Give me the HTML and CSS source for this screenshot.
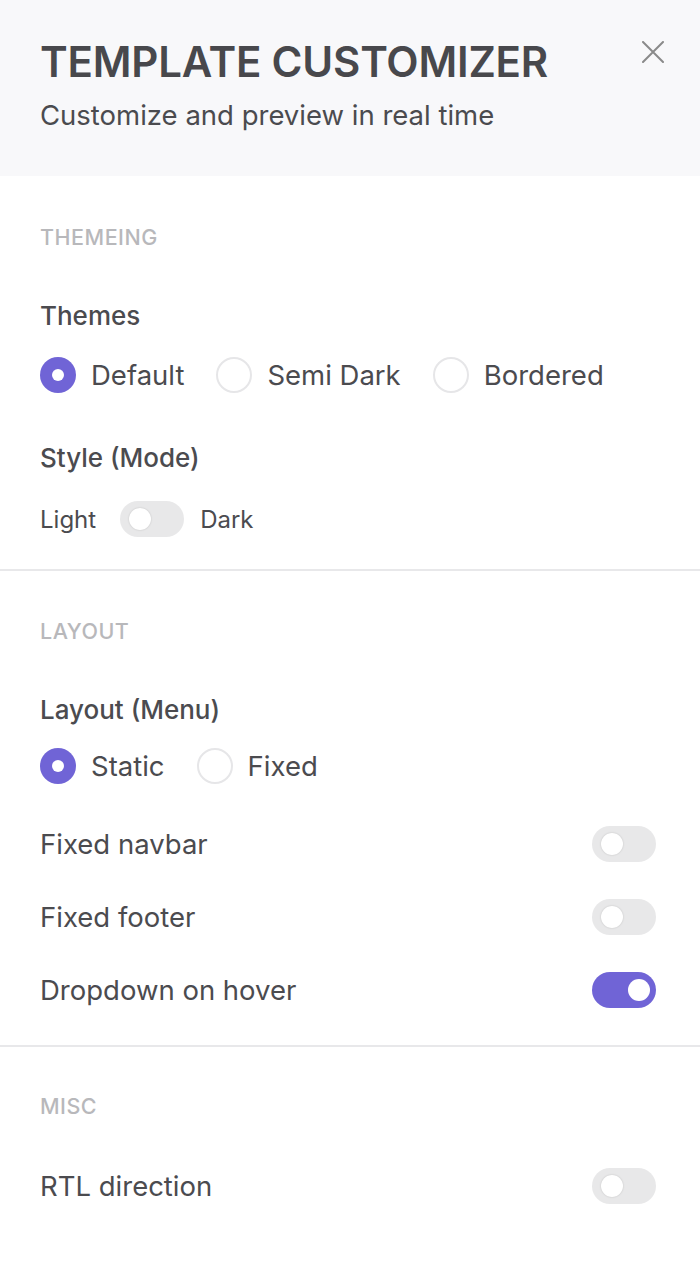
FILE: index.html
```html
<!DOCTYPE html>
<html lang="en">
<head>
<meta charset="utf-8">
<title>Template Customizer</title>
<link rel="stylesheet" href="styles.css">
</head>
<body>
<aside class="customizer">
  <header class="head">
    <div class="head-text">
      <h1 class="title">TEMPLATE CUSTOMIZER</h1>
      <p class="subtitle">Customize and preview in real time</p>
    </div>
    <button class="close" aria-label="Close">
      <svg width="22" height="22" viewBox="0 0 22 22"><path d="M1 1 L21 21 M21 1 L1 21" stroke="#8a8a8a" stroke-width="2" stroke-linecap="round"/></svg>
    </button>
  </header>

  <section class="section theming">
    <h2 class="section-title">THEMEING</h2>
    <div class="group">
      <h3 class="group-title">Themes</h3>
      <div class="radios">
        <label class="radio"><span class="dot checked"></span>Default</label>
        <label class="radio"><span class="dot"></span>Semi Dark</label>
        <label class="radio"><span class="dot"></span>Bordered</label>
      </div>
    </div>
    <div class="group">
      <h3 class="group-title">Style (Mode)</h3>
      <div class="mode">
        <span>Light</span>
        <span class="switch"></span>
        <span>Dark</span>
      </div>
    </div>
  </section>

  <section class="section layout">
    <h2 class="section-title">LAYOUT</h2>
    <div class="group">
      <h3 class="group-title">Layout (Menu)</h3>
      <div class="radios">
        <label class="radio"><span class="dot checked"></span>Static</label>
        <label class="radio"><span class="dot"></span>Fixed</label>
      </div>
    </div>
    <div class="rows">
      <div class="row"><span>Fixed navbar</span><span class="switch"></span></div>
      <div class="row"><span>Fixed footer</span><span class="switch"></span></div>
      <div class="row"><span>Dropdown on hover</span><span class="switch on"></span></div>
    </div>
  </section>

  <section class="section misc">
    <h2 class="section-title">MISC</h2>
    <div class="rows">
      <div class="row"><span>RTL direction</span><span class="switch"></span></div>
    </div>
  </section>
</aside>
</body>
</html>
```

FILE: styles.css
```css
* { box-sizing: border-box; }
html, body { margin: 0; padding: 0; background: #fff; }
body {
  font-family: Inter, "Noto Sans", "Liberation Sans", sans-serif;
  color: #4b4b4f;
}
.customizer { width: 700px; }
.head {
  background: #f8f8fa;
  height: 176px;
  padding: 38px 36px 0 40px;
  display: flex;
  justify-content: space-between;
  align-items: flex-start;
}
.title {
  margin: 0;
  font-size: 42px;
  font-weight: 600;
  line-height: 48px;
  letter-spacing: -0.2px;
  color: #48484c;
}
.subtitle {
  margin: 13px 0 0;
  font-size: 27.5px;
  line-height: 32px;
  font-weight: 400;
  color: #4b4b4f;
}
.close {
  border: 0;
  background: none;
  padding: 0;
  margin-top: 3px;
  width: 22px;
  height: 22px;
  cursor: pointer;
}
.section {
  padding: 49px 44px 32px 40px;
  border-bottom: 2px solid #e8e8ea;
}
.section.layout { padding-top: 48px; padding-bottom: 37px; }
.section.misc { padding-top: 47px; border-bottom: 0; }
.section-title {
  margin: 0;
  font-size: 21.5px;
  font-weight: 500;
  color: #b8b8bb;
  line-height: 24px;
  letter-spacing: 0.5px;
}
.group { margin-top: 51px; }
.group + .group { margin-top: 49px; }
.group-title {
  margin: 0;
  font-size: 26px;
  font-weight: 500;
  line-height: 32px;
  color: #4b4b4f;
}
.radios {
  display: flex;
  gap: 32px;
  margin-top: 25px;
}
.layout .radios { margin-top: 22px; }
.radio {
  display: flex;
  align-items: center;
  gap: 15px;
  font-size: 27.5px;
  line-height: 36px;
  color: #4b4b4f;
}
.dot {
  width: 36px;
  height: 36px;
  border-radius: 50%;
  border: 2px solid #e6e6e8;
  background: #fff;
  display: inline-block;
  position: relative;
  flex: none;
}
.dot.checked {
  border: 0;
  background: #7064d6;
}
.dot.checked::after {
  content: "";
  position: absolute;
  left: 12px;
  top: 12px;
  width: 12px;
  height: 12px;
  border-radius: 50%;
  background: #fff;
}
.mode {
  display: flex;
  align-items: center;
  gap: 16px;
  margin-top: 27px;
  font-size: 24px;
  color: #4b4b4f;
}
.mode .switch { margin-left: 8px; }
.switch {
  width: 64px;
  height: 36px;
  border-radius: 18px;
  background: #e8e8e9;
  position: relative;
  display: inline-block;
  flex: none;
}
.switch::after {
  content: "";
  position: absolute;
  top: 7px;
  left: 9px;
  width: 22px;
  height: 22px;
  border-radius: 50%;
  background: #fff;
  box-shadow: 0 0 2px rgba(0,0,0,0.18);
}
.switch.on { background: #7064d6; }
.switch.on::after { left: 36px; box-shadow: none; }
.rows { margin-top: 42px; display: flex; flex-direction: column; gap: 37px; }
.misc .rows { margin-top: 50px; }
.row {
  display: flex;
  justify-content: space-between;
  align-items: center;
  font-size: 27.5px;
  line-height: 36px;
  color: #4b4b4f;
}
```
